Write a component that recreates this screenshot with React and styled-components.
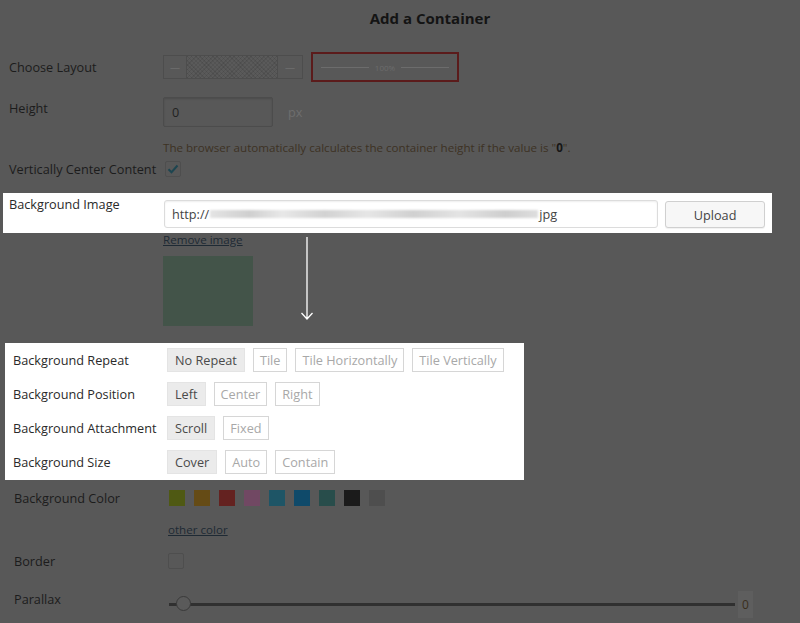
import styled, { createGlobalStyle } from "styled-components";

const GlobalStyle = createGlobalStyle`
  html, body {
    margin: 0;
    padding: 0;
    background: #585858;
  }
  body {
    font-family: "Open Sans", "Liberation Sans", sans-serif;
    font-size: 12.7px;
    color: #1c1c1c;
  }
`;

const Page = styled.div`
  width: 800px;
  height: 623px;
  overflow: hidden;
  background: #585858;
`;

const Title = styled.h1`
  margin: 0;
  padding: 7px 0 0 60px;
  height: 22px;
  text-align: center;
  font-size: 15px;
  font-weight: 700;
  color: #141414;
  line-height: 22px;
`;

const Row = styled.div`
  display: flex;
  align-items: ${(p) => (p.$top ? "flex-start" : "center")};
  margin-top: ${(p) => p.$mt || 0}px;
  padding-left: ${(p) => p.$pl || 9}px;
`;

const Label = styled.div`
  width: 154px;
  flex-shrink: 0;
  color: #1c1c1c;
  line-height: 18px;
  margin-top: ${(p) => p.$up || 0}px;
`;

const LayoutRow = styled.div`
  display: flex;
  align-items: center;
  gap: 8px;
`;

const LayoutSplit = styled.div`
  width: 140px;
  height: 24px;
  box-sizing: border-box;
  border: 1px solid #4d4d4d;
  display: flex;
`;

const SplitSide = styled.div`
  width: ${(p) => p.$w}px;
  display: flex;
  align-items: center;
  justify-content: center;
  color: #6a6a6a;
  font-size: 10px;
  border-${(p) => p.$edge}: 1px solid #4d4d4d;
`;

const SplitMid = styled.div`
  flex: 1;
  background:
    repeating-linear-gradient(45deg, rgba(0, 0, 0, 0.08) 0 1px, transparent 1px 3px),
    repeating-linear-gradient(-45deg, rgba(0, 0, 0, 0.08) 0 1px, transparent 1px 3px),
    #5a5a5a;
`;

const LayoutFull = styled.div`
  width: 148px;
  height: 30px;
  box-sizing: border-box;
  border: 2px solid #5b1b1b;
  display: flex;
  align-items: center;
  padding: 0 8px;
  gap: 6px;
  color: #6c6c6c;
  font-size: 8px;
`;

const Rule = styled.span`
  flex: 1;
  height: 1px;
  background: #6c6c6c;
`;

const DimInput = styled.div`
  width: 110px;
  height: 30px;
  border: 1px solid #4c4c4c;
  border-radius: 2px;
  box-shadow: inset 0 1px 2px rgba(0, 0, 0, 0.15);
  display: flex;
  align-items: center;
  padding-left: 8px;
  box-sizing: border-box;
  color: #222;
`;

const Unit = styled.span`
  margin-left: 15px;
  color: #6e6e6e;
`;

const Hint = styled.div`
  margin: 12px 0 0 163px;
  color: #3d3224;
  font-size: 11.6px;
  line-height: 18px;
  b {
    color: #161616;
  }
`;

const CheckBox = styled.span`
  width: 14px;
  height: 14px;
  border: 1px solid #4e4e4e;
  border-radius: 2px;
  display: inline-flex;
  align-items: center;
  justify-content: center;
  margin-left: ${(p) => p.$ml || 0}px;
`;

const Band = styled.div`
  display: flex;
  align-items: flex-start;
  margin: 15px 0 0 3px;
  width: 769px;
  height: 40px;
  box-sizing: border-box;
  padding: 2px 7px 0 6px;
  background: #fff;
`;

const BandLabel = styled(Label)`
  color: #2a2a2a;
`;

const UrlInput = styled.div`
  width: 495px;
  height: 28px;
  margin: 5px 0 0 1px;
  border: 1px solid #dcdcdc;
  border-radius: 3px;
  box-shadow: inset 0 1px 2px rgba(0, 0, 0, 0.07);
  display: flex;
  align-items: center;
  padding-left: 7px;
  box-sizing: border-box;
  color: #444;
`;

const Blur = styled.span`
  width: 328px;
  height: 8px;
  margin: 0 1px;
  background: linear-gradient(
    90deg,
    #e4e4e4 0%,
    #cfcfcf 12%,
    #e8e8e8 22%,
    #d2d2d2 35%,
    #e6e6e6 48%,
    #d0d0d0 62%,
    #e4e4e4 76%,
    #cecece 90%,
    #dedede 100%
  );
  filter: blur(1px);
`;

const UploadButton = styled.button`
  margin: 6px 0 0 7px;
  width: 100px;
  height: 27px;
  border: 1px solid #d0d0d0;
  border-radius: 3px;
  background: #f7f7f7;
  color: #444;
  font-family: inherit;
  font-size: 12.7px;
  box-shadow: 0 1px 1px rgba(0, 0, 0, 0.06);
`;

const Preview = styled.div`
  display: flex;
  margin: -2px 0 0 163px;
`;

const PreviewCol = styled.div`
  display: flex;
  flex-direction: column;
  align-items: flex-start;
`;

const DimLink = styled.a`
  color: #1e2a34;
  font-size: 11.6px;
  text-decoration: underline;
  line-height: 18px;
  cursor: pointer;
`;

const Swatch = styled.div`
  width: 90px;
  height: 70px;
  margin-top: 7px;
  background: #435449;
`;

const Arrow = styled.svg`
  margin: 6px 0 0 47px;
`;

const Group = styled.div`
  margin: 17px 0 0 5px;
  width: 519px;
  height: 137px;
  box-sizing: border-box;
  padding: 5px 0 0 8px;
  background: #fff;
  display: flex;
  flex-direction: column;
  gap: 10px;
`;

const OptionRow = styled.div`
  display: flex;
  align-items: center;
`;

const OptionLabel = styled.div`
  width: 154px;
  flex-shrink: 0;
  color: #2a2a2a;
`;

const Segments = styled.div`
  display: flex;
  gap: 8px;
`;

const Segment = styled.span`
  height: 24px;
  box-sizing: border-box;
  padding: 0 ${(p) => (p.$on ? 7 : 6)}px;
  display: inline-flex;
  align-items: center;
  border: 1px solid ${(p) => (p.$on ? "#e4e4e4" : "#d6d6d6")};
  background: ${(p) => (p.$on ? "#ebebeb" : "#fff")};
  color: ${(p) => (p.$on ? "#4a4a4a" : "#a8a8a8")};
`;

const Colors = styled.div`
  display: flex;
  gap: 9px;
  margin-left: 1px;
`;

const Color = styled.span`
  width: 16px;
  height: 16px;
  background: ${(p) => p.$c};
`;

const SliderWrap = styled.div`
  display: flex;
  align-items: center;
  margin-top: 1px;
`;

const Slider = styled.div`
  position: relative;
  width: 566px;
  height: 3px;
  margin-left: 1px;
  background: #303030;
`;

const Knob = styled.span`
  position: absolute;
  left: 7px;
  top: -7px;
  width: 15px;
  height: 15px;
  border-radius: 50%;
  border: 1px solid #3a3a3a;
  background: #5a5a5a;
  box-sizing: border-box;
`;

const SliderValue = styled.span`
  margin-left: 3px;
  padding: 5px 4px;
  background: #5e5e5e;
  color: #3a2e1c;
  font-size: 12px;
`;

const options = [
  ["Background Repeat", ["No Repeat", "Tile", "Tile Horizontally", "Tile Vertically"]],
  ["Background Position", ["Left", "Center", "Right"]],
  ["Background Attachment", ["Scroll", "Fixed"]],
  ["Background Size", ["Cover", "Auto", "Contain"]],
];

const swatches = [
  "#4f5913",
  "#654b15",
  "#642220",
  "#714863",
  "#1e5566",
  "#0f4a6a",
  "#284d4b",
  "#1b1b1b",
  "#4e4e4e",
];

const Check = () => (
  <svg width="12" height="10" viewBox="0 0 12 10">
    <path d="M1.5 5.2 L4.5 8.2 L10.5 1.5" fill="none" stroke="#1d4550" strokeWidth="2" />
  </svg>
);

const App = () => {
  return (
    <Page>
      <GlobalStyle />
      <Title>Add a Container</Title>

      <Row $mt={23}>
        <Label>Choose Layout</Label>
        <LayoutRow>
          <LayoutSplit>
            <SplitSide $w={22} $edge="right">—</SplitSide>
            <SplitMid />
            <SplitSide $w={24} $edge="left">—</SplitSide>
          </LayoutSplit>
          <LayoutFull>
            <Rule />
            100%
            <Rule />
          </LayoutFull>
        </LayoutRow>
      </Row>

      <Row $mt={15}>
        <Label $up={-8}>Height</Label>
        <DimInput>0</DimInput>
        <Unit>px</Unit>
      </Row>

      <Hint>
        The browser automatically calculates the container height if the value is "<b>0</b>".
      </Hint>

      <Row $mt={3}>
        <Label>Vertically Center Content</Label>
        <CheckBox $ml={2}>
          <Check />
        </CheckBox>
      </Row>

      <Band>
        <BandLabel>Background Image</BandLabel>
        <UrlInput>
          http://
          <Blur />
          jpg
        </UrlInput>
        <UploadButton>Upload</UploadButton>
      </Band>

      <Preview>
        <PreviewCol>
          <DimLink>Remove image</DimLink>
          <Swatch />
        </PreviewCol>
        <Arrow width="14" height="84" viewBox="0 0 14 84">
          <path d="M7 0 V82 M1.5 76 L7 82 L12.5 76" fill="none" stroke="#fff" strokeWidth="1.3" />
        </Arrow>
      </Preview>

      <Group>
        {options.map(([label, items]) => (
          <OptionRow key={label}>
            <OptionLabel>{label}</OptionLabel>
            <Segments>
              {items.map((item, i) => (
                <Segment key={item} $on={i === 0}>
                  {item}
                </Segment>
              ))}
            </Segments>
          </OptionRow>
        ))}
      </Group>

      <Row $mt={9} $pl={14}>
        <Label>Background Color</Label>
        <Colors>
          {swatches.map((c) => (
            <Color key={c} $c={c} />
          ))}
        </Colors>
      </Row>

      <Row $mt={14} $pl={168}>
        <DimLink>other color</DimLink>
      </Row>

      <Row $mt={13} $pl={14}>
        <Label>Border</Label>
        <CheckBox $ml={0} />
      </Row>

      <Row $mt={20} $pl={14} $top>
        <Label>Parallax</Label>
        <SliderWrap>
          <Slider>
            <Knob />
          </Slider>
          <SliderValue>0</SliderValue>
        </SliderWrap>
      </Row>
    </Page>
  );
};

export default App;
